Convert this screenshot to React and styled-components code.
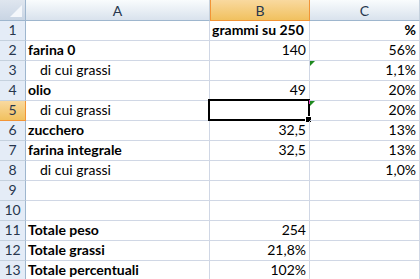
import React from "react"
import styled, { createGlobalStyle } from "styled-components"

const Global = createGlobalStyle`
    html, body {
        margin: 0;
        padding: 0;
        background: #fff;
    }
    body {
        font-family: Lato, "Liberation Sans", sans-serif;
        overflow: hidden;
    }
`

const Sheet = styled.div`
    display: grid;
    grid-template-columns: 26px 184px 100px 1fr;
    grid-template-rows: 21px;
    grid-auto-rows: 20px;
    width: 420px;
    height: 279px;
    overflow: hidden;
    font-size: 14px;
    color: #000;
`

const Corner = styled.div`
    position: relative;
    box-sizing: border-box;
    background: linear-gradient(#dfe6ef, #c9d5e4);
    border-right: 1px solid #9eb6ce;
    border-bottom: 1px solid #9eb6ce;
    &::after {
        content: "";
        position: absolute;
        right: 3px;
        bottom: 3px;
        width: 0;
        height: 0;
        border-left: 12px solid transparent;
        border-bottom: 12px solid #f4f7fb;
    }
`

const ColHead = styled.div`
    box-sizing: border-box;
    display: flex;
    align-items: center;
    justify-content: center;
    padding-top: 1px;
    background: ${(p) => p.$active
        ? "linear-gradient(#f9d99f, #f1c15f)"
        : "linear-gradient(#f9fcfd, #d9e2ed)"};
    border-right: 1px solid ${(p) => p.$active ? "#f29436" : "#c5d1de"};
    border-left: ${(p) => p.$active ? "1px solid #f29436" : "none"};
    border-bottom: 1px solid ${(p) => p.$active ? "#f29436" : "#9eb6ce"};
    color: #27364d;
    font-size: 14px;
`

const RowHead = styled.div`
    box-sizing: border-box;
    display: flex;
    align-items: flex-end;
    justify-content: center;
    padding-bottom: 1px;
    line-height: 18px;
    background: ${(p) => p.$active ? "linear-gradient(#f9d99f, #f1c15f)" : "#e4ecf7"};
    border-right: 1px solid ${(p) => p.$active ? "#f29436" : "#9eb6ce"};
    border-bottom: 1px solid ${(p) => p.$active ? "#f29436" : "#c5d1de"};
    color: #27364d;
`

const Cell = styled.div`
    position: relative;
    box-sizing: border-box;
    display: flex;
    align-items: flex-end;
    justify-content: ${(p) => p.$right ? "flex-end" : "flex-start"};
    padding: 0 3px 1px ${(p) => p.$indent ? "14px" : "2px"};
    line-height: 18px;
    white-space: nowrap;
    font-weight: ${(p) => p.$bold ? 700 : 400};
    border-right: 1px solid #d0d7e5;
    border-bottom: 1px solid #d0d7e5;
`

const Flag = styled.span`
    position: absolute;
    top: 0;
    left: 0;
    width: 0;
    height: 0;
    border-top: 5px solid #1f8a1f;
    border-right: 5px solid transparent;
`

const Selection = styled.span`
    position: absolute;
    top: -2px;
    left: -2px;
    right: -1px;
    bottom: -1px;
    border: 2px solid #000;
    &::before {
        content: "";
        position: absolute;
        top: -1px;
        right: -2px;
        width: 1px;
        height: 4px;
        background: #e040c0;
    }
    &::after {
        content: "";
        position: absolute;
        right: -4px;
        bottom: -4px;
        width: 5px;
        height: 5px;
        background: #000;
        border: 1px solid #fff;
    }
`

const rows = [
    ["", "grammi su 250", "%", { bold: true, boldB: true, boldC: true }],
    ["farina 0", "140", "56%", { bold: true }],
    ["di cui grassi", "", "1,1%", { indent: true, flagC: true }],
    ["olio", "49", "20%", { bold: true }],
    ["di cui grassi", "", "20%", { indent: true, flagC: true, selected: true }],
    ["zucchero", "32,5", "13%", { bold: true }],
    ["farina integrale", "32,5", "13%", { bold: true }],
    ["di cui grassi", "", "1,0%", { indent: true }],
    ["", "", "", {}],
    ["", "", "", {}],
    ["Totale peso", "254", "", { bold: true }],
    ["Totale grassi", "21,8%", "", { bold: true }],
    ["Totale percentuali", "102%", "", { bold: true }],
]

const App = () => {
    return (
        <>
            <Global />
            <Sheet>
                <Corner />
                <ColHead>A</ColHead>
                <ColHead $active>B</ColHead>
                <ColHead>C</ColHead>
                {rows.map(([a, b, c, o], i) => (
                    <React.Fragment key={i}>
                        <RowHead $active={o.selected}>{i + 1}</RowHead>
                        <Cell $bold={o.bold} $indent={o.indent}>{a}</Cell>
                        <Cell $bold={o.boldB} $right={!o.boldB}>
                            {b}
                            {o.selected && <Selection />}
                        </Cell>
                        <Cell $bold={o.boldC} $right>
                            {o.flagC && <Flag />}
                            {c}
                        </Cell>
                    </React.Fragment>
                ))}
            </Sheet>
        </>
    )
}

export default App
